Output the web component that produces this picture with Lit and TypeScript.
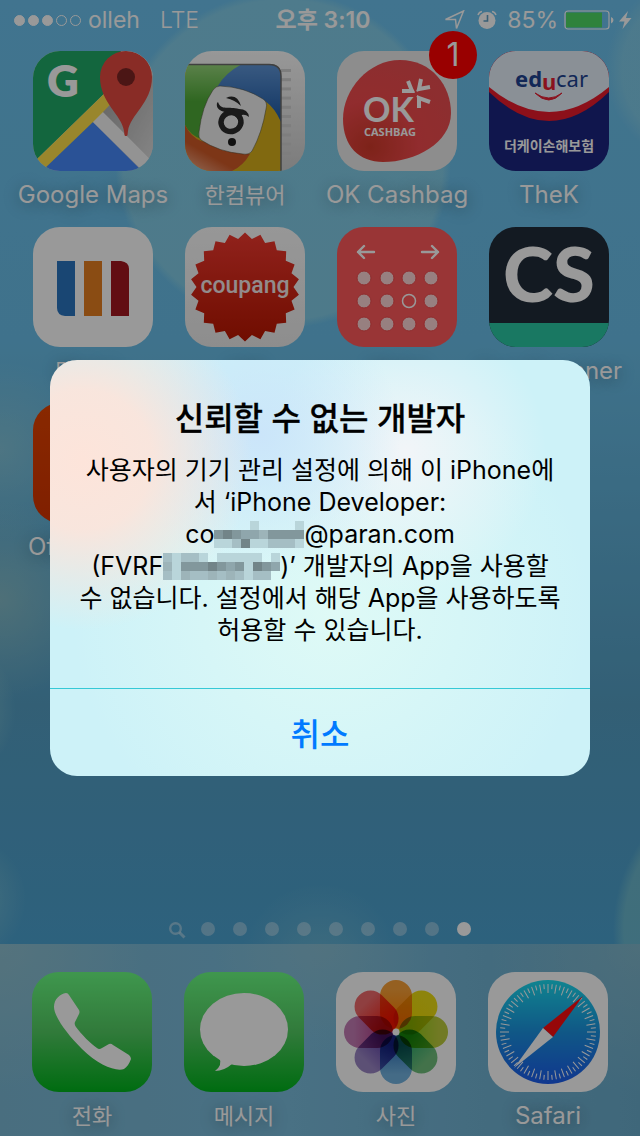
import { LitElement, html, svg, css, type TemplateResult } from "lit";
import { customElement, property } from "lit/decorators.js";

interface AppItem {
  name: string;
  lang: string;
  icon: TemplateResult;
  badge?: number;
}

const mapsIcon = html`<svg viewBox="0 0 120 120" aria-hidden="true">
  <defs>
    <linearGradient id="land" x1="0" y1="0" x2="1" y2="1">
      <stop offset="0" stop-color="#f4f4f4" /><stop offset="1" stop-color="#d6d6d6" />
    </linearGradient>
    <linearGradient id="shade" x1="0" y1="0" x2="1" y2="1">
      <stop offset="0" stop-color="#a4a4a4" /><stop offset="1" stop-color="#dedede" />
    </linearGradient>
  </defs>
  <rect width="120" height="120" fill="url(#land)" />
  <path d="M0 0H88L74 40L0 112Z" fill="#20ab68" />
  <path d="M0 112L76 38L86 46L12 120H0Z" fill="#ffe04a" />
  <path d="M60 71L9 120H109Z" fill="#4789fa" />
  <path d="M60 71L70 61L122 113L112 122Z" fill="#f6f6f6" />
  <path d="M70 61L92 38L120 24V111Z" fill="url(#shade)" />
  <path d="M93 85C91 85 91.500 83 91 80C89 64 67 52 67 26A26 26 0 0 1 119 26C119 52 97 64 95 80C94.500 83 95 85 93 85Z" fill="#e44a40" />
  <circle cx="93" cy="26" r="9" fill="#7d2624" />
  <text x="30" y="46" text-anchor="middle" font-family="Lato" font-weight="800" font-size="44" fill="#fff">G</text>
</svg>`;

const hancomLines = Array.from({ length: 10 }, (_, i) => svg`<rect x="96" y=${18 + i * 9.2} width="10" height="3" fill="#d2d2d2" />`);

const hancomIcon = html`<svg viewBox="0 0 120 120" aria-hidden="true">
  <defs>
    <linearGradient id="paper" x1="0" y1="0" x2="0" y2="1">
      <stop offset="0" stop-color="#fdfdfd" /><stop offset="1" stop-color="#cfcfcf" />
    </linearGradient>
    <linearGradient id="leaf" x1="0" y1="0" x2="0" y2="1">
      <stop offset="0" stop-color="#98d87c" /><stop offset=".5" stop-color="#4fab37" />
    </linearGradient>
    <linearGradient id="sea" x1="0" y1="0" x2="0" y2="1">
      <stop offset="0" stop-color="#6096d8" /><stop offset="1" stop-color="#1d5aa6" />
    </linearGradient>
    <linearGradient id="rust" x1="0" y1="1" x2=".8" y2="0">
      <stop offset="0" stop-color="#f2b193" /><stop offset=".4" stop-color="#d05a27" />
    </linearGradient>
    <clipPath id="panel"><path d="M0 13H84Q96 13 96 25V120H0Z" /></clipPath>
  </defs>
  <rect width="120" height="120" fill="url(#paper)" />
  ${hancomLines}
  <g clip-path="url(#panel)">
    <rect width="96" height="120" fill="#d8b01c" />
    <path d="M0 13H58Q40 24 32 36L16 88Q5 84 0 74Z" fill="url(#leaf)" />
    <path d="M57 13H96V71Q90 57 80 50L32 36Q40 22 57 13Z" fill="url(#sea)" />
    <path d="M0 74Q6 86 16 90L65 103Q58 115 47 120H0Z" fill="url(#rust)" />
    <path d="M35 35Q60 36 78 48Q83 51 81 58Q77 82 67 100Q64 104 58 103Q34 101 16 89Q13 87 14 81Q17 55 28 39Q31 35 35 35Z" fill="#f1f1f1" stroke="#4c4c38" stroke-opacity=".5" />
  </g>
  <path d="M3 13.500H84Q96 13.500 96 25V120" fill="none" stroke="#6b6b6b" stroke-width="1.500" />
  <ellipse cx="46" cy="71" rx="10" ry="9.500" fill="none" stroke="#2c2c2c" stroke-width="5.500" transform="rotate(-20 46 71)" />
  <path d="M33 51C36 60 44 55 54 58Q63 58 64 66Q59 62 55 65Q58 70 58 75L51 66C44 60 30 62 32 52Z" fill="#2c2c2c" />
  <path d="M41 47Q52 42 56 55Q50 49 41 47Z" fill="#2c2c2c" />
  <circle cx="47" cy="91" r="4" fill="#1c1c1c" />
</svg>`;

const cashbagIcon = html`<svg viewBox="0 0 120 120" aria-hidden="true">
  <defs>
    <radialGradient id="bag" cx=".25" cy=".85" r=".9">
      <stop offset="0" stop-color="#d13a2a" /><stop offset=".5" stop-color="#f24a4d" /><stop offset="1" stop-color="#ea4e50" />
    </radialGradient>
  </defs>
  <rect width="120" height="120" fill="#ececec" />
  <path d="M63 9C95 9 114 35 114 62C114 92 78 111 46 111C22 111 6 95 6 68C6 38 32 9 63 9Z" fill="url(#bag)" />
  <text x="26" y="71" font-family="Lato" font-weight="700" font-size="34" fill="#fff">OK</text>
  <text x="27" y="85" font-family="Open Sans" font-weight="700" font-size="11" fill="#fff">CASHBAG</text>
  <path d="M71 30L75 40H65M84 28L82 38L93 36M82 57V47L93 51" fill="none" stroke="#fff" stroke-width="4" />
  <path d="M74 37L77 41M80 40L84 36M80 45L84 49" fill="none" stroke="#fff" stroke-width="2" />
</svg>`;

const thekIcon = html`<svg viewBox="0 0 120 120" aria-hidden="true">
  <rect width="120" height="120" fill="#1b2580" />
  <path d="M0 0H120V41Q60 99 0 41Z" fill="#ea1b2c" />
  <path d="M0 0H120V36Q60 86 0 36Z" fill="#e6f0fa" />
  <text y="36" font-family="Noto Sans" font-size="22" fill="#1e4391"><tspan x="26" font-weight="700">ed</tspan><tspan x="53" y="39" font-weight="700" fill="#e71f32">u</tspan><tspan x="67" y="36">car</tspan></text>
  <path d="M46 42Q60 56 73 42Q60 52 46 42Z" fill="#e71f32" stroke="#e71f32" />
  <text x="60" y="100" text-anchor="middle" font-family="Noto Sans CJK KR" font-size="14" font-weight="700" fill="#fff">더케이손해보험</text>
</svg>`;

const barsIcon = html`<svg viewBox="0 0 120 120" aria-hidden="true">
  <rect width="120" height="120" fill="#fff" />
  <path d="M24 34H42V89H32Q24 88 24 81Z" fill="#2a75c0" />
  <rect x="51" y="34" width="18" height="55" fill="#e67f21" />
  <path d="M78 34H88Q96 35 96 42V89H78Z" fill="#a3171e" />
</svg>`;

const burst = Array.from({ length: 44 }, (_, i) => {
  const r = i % 2 ? 48.5 : 54.5;
  const a = (i * Math.PI) / 22 - Math.PI / 2;
  return `${(60 + r * Math.cos(a)).toFixed(1)},${(60 + r * Math.sin(a)).toFixed(1)}`;
}).join(" ");

const coupangIcon = html`<svg viewBox="0 0 120 120" aria-hidden="true">
  <defs>
    <linearGradient id="seal" x1="0" y1="0" x2="0" y2="1">
      <stop offset="0" stop-color="#f2392f" /><stop offset="1" stop-color="#ba1600" />
    </linearGradient>
    <linearGradient id="cloth" x1="0" y1="0" x2="0" y2="1">
      <stop offset="0" stop-color="#fcfcfc" /><stop offset="1" stop-color="#ececec" />
    </linearGradient>
  </defs>
  <rect width="120" height="120" fill="url(#cloth)" />
  <polygon points=${burst} fill="url(#seal)" />
  <text x="60" y="66" text-anchor="middle" font-family="Roboto" font-weight="500" font-size="23" fill="#f4eaea">coupang</text>
</svg>`;

const calendarDots = [51, 74, 97].flatMap((y, r) =>
  [27, 50, 72, 94].map((x, c) =>
    r === 1 && c === 2
      ? svg`<circle cx=${x} cy=${y} r="6.500" fill="none" stroke="#fff" stroke-width="1.500" />`
      : svg`<circle cx=${x} cy=${y} r="7" fill="#fcd6d6" stroke="#f0484a" />`
  )
);

const calendarIcon = html`<svg viewBox="0 0 120 120" aria-hidden="true">
  <rect width="120" height="120" fill="#ff595b" />
  <path d="M37 25H21M27 19L21 25L27 31M85 25H101M95 19L101 25L95 31" fill="none" stroke="#fff" stroke-width="2.400" stroke-linecap="round" stroke-linejoin="round" />
  ${calendarDots}
</svg>`;

const scannerIcon = html`<svg viewBox="0 0 120 120" aria-hidden="true">
  <rect width="120" height="120" fill="#212c3a" />
  <rect y="96" width="120" height="24" fill="#2bc8a3" />
  <text x="60" y="75" text-anchor="middle" font-family="Lato" font-weight="900" font-size="76" fill="#fff">CS</text>
</svg>`;

const lensIcon = html`<svg viewBox="0 0 120 120" aria-hidden="true">
  <defs>
    <linearGradient id="lens" x1="0" y1="0" x2="0" y2="1">
      <stop offset="0" stop-color="#e44400" /><stop offset="1" stop-color="#d53400" />
    </linearGradient>
  </defs>
  <rect width="120" height="120" fill="url(#lens)" />
</svg>`;

const greenStops = svg`<stop offset="0" stop-color="#6afc82" /><stop offset=".5" stop-color="#52cc62" /><stop offset="1" stop-color="#00b41c" />`;

const phoneIcon = html`<svg viewBox="0 0 120 120" aria-hidden="true">
  <defs><linearGradient id="call" x1="0" y1="0" x2="0" y2="1">${greenStops}</linearGradient></defs>
  <rect width="120" height="120" fill="url(#call)" />
  <path d="M22 35C22 27 28 22 34 21Q36 21 37 23L47 38Q48 40 47 42L43 50Q42 52 44 55C50 63 58 71 65 76Q67 78 70 76L77 72Q79 71 81 73L97 83Q99 85 99 87C97 92 95 95 92 97C84 100 66 93 50 77C34 61 22 44 22 35Z" fill="#fff" />
</svg>`;

const messagesIcon = html`<svg viewBox="0 0 120 120" aria-hidden="true">
  <defs><linearGradient id="chat" x1="0" y1="0" x2="0" y2="1">${greenStops}</linearGradient></defs>
  <rect width="120" height="120" fill="url(#chat)" />
  <ellipse cx="60" cy="57.500" rx="44" ry="36.500" fill="#fff" />
  <path d="M35 85Q39 93 31 99Q40 99 48 92Z" fill="#fff" />
</svg>`;

/* Outer and inner tone of each petal, clockwise from the top. */
const petalTones = [
  ["#f8a038", "#ff8200"],
  ["#ecdc14", "#eed800"],
  ["#bccc3c", "#8cc814"],
  ["#70bf7c", "#24a468"],
  ["#72b2df", "#2f74bc"],
  ["#9a86c4", "#5c3ea6"],
  ["#c47cb4", "#b03a84"],
  ["#ee6a6c", "#f42418"],
];

const photosIcon = html`<svg viewBox="0 0 120 120" aria-hidden="true">
  <defs>
    ${petalTones.map(
      ([outer, inner], i) => svg`<linearGradient id=${`petal${i}`} x1="0" y1="0" x2="0" y2="1">
        <stop offset=".2" stop-color=${outer} /><stop offset=".8" stop-color=${inner} />
      </linearGradient>`
    )}
  </defs>
  <rect width="120" height="120" fill="#fff" />
  ${petalTones.map(
    (_, i) => svg`<rect class="petal" x="44" y="8" width="32" height="49" rx="16" fill=${`url(#petal${i})`} transform=${`rotate(${i * 45} 60 60)`} />`
  )}
  <circle cx="60" cy="60" r="3.500" fill="#fff" />
</svg>`;

const ticks = Array.from(
  { length: 72 },
  (_, i) => svg`<path d=${i % 2 ? "M60 12V17" : "M60 12V21"} stroke="#fff" transform=${`rotate(${i * 5} 60 60)`} />`
);

const safariIcon = html`<svg viewBox="0 0 120 120" aria-hidden="true">
  <defs>
    <linearGradient id="dial" x1="0" y1="0" x2="0" y2="1">
      <stop offset="0" stop-color="#1cdcf0" /><stop offset=".5" stop-color="#1b92e0" /><stop offset="1" stop-color="#1c5cee" />
    </linearGradient>
  </defs>
  <rect width="120" height="120" fill="#fff" />
  <circle cx="60" cy="60" r="52" fill="url(#dial)" />
  ${ticks}
  <path d="M95 24L55 56L65 65Z" fill="#fb0d0f" />
  <path d="M26 96L55 56L65 65Z" fill="#fff" />
</svg>`;

const homeApps: AppItem[] = [
  { name: "Google Maps", lang: "en", icon: mapsIcon },
  { name: "한컴뷰어", lang: "ko", icon: hancomIcon },
  { name: "OK Cashbag", lang: "en", icon: cashbagIcon, badge: 1 },
  { name: "TheK", lang: "en", icon: thekIcon },
  { name: "멤버십+", lang: "ko", icon: barsIcon },
  { name: "쿠팡", lang: "ko", icon: coupangIcon },
  { name: "캘린더", lang: "ko", icon: calendarIcon },
  { name: "CamScanner", lang: "en", icon: scannerIcon },
  { name: "Office Lens", lang: "en", icon: lensIcon },
];

const dockApps: AppItem[] = [
  { name: "전화", lang: "ko", icon: phoneIcon },
  { name: "메시지", lang: "ko", icon: messagesIcon },
  { name: "사진", lang: "ko", icon: photosIcon },
  { name: "Safari", lang: "en", icon: safariIcon },
];

@customElement("app-tile")
class AppTile extends LitElement {
  @property({ attribute: false }) app!: AppItem;

  static styles = css`
    :host { display: block; min-width: 0; }
    .tile {
      display: flex; flex-direction: column; align-items: center; gap: 10px;
      width: 100%; padding: 0; border: 0; background: none; color: #fff; font: inherit;
    }
    .frame { position: relative; width: 120px; height: 120px; }
    .frame svg { display: block; width: 100%; height: 100%; border-radius: 27px; isolation: isolate; }
    .petal { mix-blend-mode: multiply; }
    .label {
      font-size: 24px; line-height: 28px; white-space: nowrap;
      text-shadow: 0 2px 16px rgba(0, 0, 0, 0.4);
    }
    .label:lang(ko) { font-size: 22px; }
    .badge {
      position: absolute; top: -20px; right: -20px; width: 48px; height: 48px;
      border-radius: 50%; background: #ff0000; font-size: 32px; line-height: 48px; text-align: center;
    }
  `;

  render() {
    const { name, lang, icon, badge } = this.app;
    return html`<button class="tile" type="button">
      <span class="frame">${icon}${badge ? html`<span class="badge">${badge}</span>` : ""}</span>
      <span class="label" lang=${lang}>${name}</span>
    </button>`;
  }
}

@customElement("status-bar")
class StatusBar extends LitElement {
  static styles = css`
    :host {
      display: grid; grid-template-columns: 1fr auto 1fr; align-items: center;
      height: 40px; padding: 0 8px 0 14px; color: #fff; font-size: 23px; line-height: 40px;
    }
    .side { display: flex; align-items: center; }
    .signal { display: flex; gap: 3px; margin-right: 7px; }
    .bar { box-sizing: border-box; width: 11px; height: 11px; border: 1px solid #fff; border-radius: 50%; }
    .on { background: #fff; }
    .network { margin-left: 20px; font-weight: 300; }
    .time { font-weight: 600; }
    .end { justify-content: flex-end; }
    svg { display: block; }
    .arrow { margin-right: 12px; }
    .alarm { margin-right: 10px; }
    .battery { margin: 0 5px 0 6px; }
  `;

  render() {
    return html`
      <div class="side">
        <span class="signal">${[1, 1, 1, 0, 0].map((on) => html`<i class="bar ${on ? "on" : ""}"></i>`)}</span>
        <span>olleh</span><span class="network">LTE</span>
      </div>
      <div class="time">오후 3:10</div>
      <div class="side end">
        <svg class="arrow" width="21" height="20" viewBox="0 0 21 20" aria-hidden="true">
          <path d="M1.500 9.500L19.500 1L12.500 18.500L11.500 9.500Z" fill="none" stroke="#fff" stroke-width="1.500" />
        </svg>
        <svg class="alarm" width="20" height="20" viewBox="0 0 20 20" aria-hidden="true">
          <circle cx="10" cy="10.500" r="8.500" fill="#fff" />
          <path d="M1 5Q2 2 5 1.500M19 5Q18 2 15 1.500" fill="none" stroke="#fff" stroke-width="1.500" />
          <path d="M10.500 5V11H6.500" fill="none" stroke="#5f9fc4" stroke-width="1.600" />
        </svg>
        <span>85%</span>
        <svg class="battery" width="50" height="20" viewBox="0 0 50 20" aria-hidden="true">
          <rect x="1" y="1" width="44" height="18" rx="3" fill="none" stroke="#fff" stroke-width="1.200" />
          <rect x="2" y="2.500" width="36" height="15" fill="#4fd964" />
          <path d="M47 7Q49.500 8 49.500 10Q49.500 12.500 47 13.500Z" fill="#fff" />
        </svg>
        <svg width="13" height="18" viewBox="0 0 13 18" aria-hidden="true">
          <path d="M9 0L0 10.500H5.500L3.500 18L12.500 7H7Z" fill="#fff" />
        </svg>
      </div>
    `;
  }
}

/* Tone of each cell in a redaction block; "." leaves the cell clear. */
const tones: Record<string, string> = {
  a: "#b9d5da", b: "#a5bec4", c: "#8fa6ac", d: "#82979c", e: "#728488", f: "#9db4b9",
};

@customElement("censor-block")
class CensorBlock extends LitElement {
  @property({ attribute: false }) rows: string[] = [];

  static styles = css`
    :host { display: inline-block; vertical-align: -5px; line-height: 0; }
  `;

  render() {
    const width = this.rows[0].length * 9;
    return html`<svg width=${width} height="27" viewBox="0 0 ${width} 27" shape-rendering="crispEdges" aria-hidden="true">
      ${this.rows.flatMap((row, y) =>
        [...row].map((t, x) => (t === "." ? "" : svg`<rect x=${x * 9} y=${y * 9} width="9" height="9" fill=${tones[t]} />`))
      )}
    </svg>`;
  }
}

@customElement("trust-alert")
class TrustAlert extends LitElement {
  static styles = css`
    :host {
      display: block; width: 540px; max-width: calc(100% - 32px); overflow: hidden;
      border-radius: 27px; color: #000; text-align: center;
      background:
        radial-gradient(circle at 6% 24%, #fde4da 0, rgba(253, 228, 218, 0.9) 70px, rgba(253, 228, 218, 0) 170px),
        radial-gradient(circle at 39% 18%, #cbe5fa 0, rgba(203, 229, 250, 0) 140px),
        radial-gradient(circle at 66% 22%, #f2f5f8 0, rgba(242, 245, 248, 0) 140px),
        radial-gradient(circle at 52% 60%, #dffaf6 0, rgba(223, 250, 246, 0) 260px),
        #cdf2f8;
    }
    .content { padding: 39px 16px 42px; }
    h1 { margin: 0 0 15px; font-size: 32px; line-height: 40px; font-weight: 500; -webkit-text-stroke: 0.3px #000; }
    p { margin: 0; font-size: 25px; line-height: 32px; }
    button {
      display: block; width: 100%; height: 88px; padding: 0 0 2px; border: 0; border-top: 1px solid #35c9d6;
      background: none; color: #007aff; font: inherit; font-size: 32px; font-weight: 500;
    }
  `;

  render() {
    return html`
      <div class="content">
        <h1 id="title">신뢰할 수 없는 개발자</h1>
        <p>
          사용자의 기기 관리 설정에 의해 이 iPhone에<br />서 ‘iPhone Developer:<br />co<censor-block
            .rows=${["....a....a", "dedccfdddd", "aabeaabbba"]}
          ></censor-block>@paran.com<br />(FVRF<censor-block
            .rows=${["babba.aaaaa.a", "fadddedcdaedc", "bafbbfbfbabb."]}
          ></censor-block>)’ 개발자의 App을 사용할<br />수 없습니다. 설정에서 해당 App을 사용하도록<br />허용할 수 있습니다.
        </p>
      </div>
      <button type="button">취소</button>
    `;
  }
}

@customElement("app-root")
class AppRoot extends LitElement {
  static styles = css`
    :host {
      position: relative; display: flex; flex-direction: column; min-height: 100vh; overflow: hidden;
      font-family: "Inter", "Noto Sans CJK KR", sans-serif;
      background:
        radial-gradient(circle at 283px 160px, rgba(170, 225, 225, 0.36) 160px, rgba(170, 225, 225, 0) 168px),
        radial-gradient(circle at 700px 70px, rgba(170, 225, 225, 0.3) 78px, rgba(170, 225, 225, 0) 94px),
        radial-gradient(circle at 0 600px, rgba(190, 215, 190, 0.4) 0, rgba(190, 215, 190, 0) 100px),
        radial-gradient(circle at 0 450px, rgba(180, 220, 210, 0.36) 0, rgba(180, 220, 210, 0) 90px),
        radial-gradient(circle at -60px 710px, rgba(160, 215, 215, 0.3) 50px, rgba(160, 215, 215, 0) 76px),
        radial-gradient(circle at -40px 900px, rgba(160, 215, 215, 0.3) 30px, rgba(160, 215, 215, 0) 66px),
        radial-gradient(circle at 770px 930px, rgba(150, 215, 205, 0.4) 146px, rgba(150, 215, 205, 0) 157px),
        radial-gradient(circle at 320px 964px, rgba(160, 215, 215, 0.35) 0, rgba(160, 215, 215, 0) 80px),
        linear-gradient(#6dc2ee 0, #6abfe9 30%, #559fc4 62%, #4ba3d2 85%, #4ba3d2 100%);
    }
    .grid {
      flex: 1; display: grid; grid-template-columns: repeat(4, 1fr); align-content: start;
      row-gap: 18px; padding: 11px 15px 0 17px;
    }
    .pages { display: flex; justify-content: center; align-items: center; gap: 18px; height: 30px; }
    .page { width: 14px; height: 14px; border-radius: 50%; background: rgba(255, 255, 255, 0.35); }
    .current { background: #fff; }
    .search { overflow: visible; }
    .dock {
      display: grid; grid-template-columns: repeat(4, 1fr); padding: 28px 16px 6px;
      background:
        radial-gradient(circle at 0 0, rgba(160, 200, 205, 0.5) 0, rgba(160, 200, 205, 0) 150px),
        radial-gradient(circle at 50% 0, rgba(150, 195, 205, 0.5) 0, rgba(150, 195, 205, 0) 110px),
        radial-gradient(circle at 100% 0, rgba(150, 195, 205, 0.5) 0, rgba(150, 195, 205, 0) 150px),
        linear-gradient(90deg, #7ab8d4 0, #7abcdc 45%, #6aaccc 100%);
    }
    .shade {
      position: absolute; inset: 0; display: flex; align-items: center; justify-content: center;
      background: rgba(0, 0, 0, 0.4);
    }
  `;

  render() {
    return html`
      <status-bar></status-bar>
      <main class="grid">${homeApps.map((app) => html`<app-tile .app=${app}></app-tile>`)}</main>
      <div class="pages">
        <svg class="search" width="14" height="14" viewBox="0 0 14 14" aria-hidden="true">
          <circle cx="6.500" cy="6.500" r="5.300" fill="none" stroke="#fff" stroke-opacity=".4" stroke-width="2.400" />
          <path d="M10.500 10.500L15.500 15.500" stroke="#fff" stroke-opacity=".4" stroke-width="3" />
        </svg>
        ${Array.from({ length: 9 }, (_, i) => html`<i class="page ${i === 8 ? "current" : ""}"></i>`)}
      </div>
      <nav class="dock">${dockApps.map((app) => html`<app-tile .app=${app}></app-tile>`)}</nav>
      <div class="shade"><trust-alert role="alertdialog" aria-modal="true" aria-label="신뢰할 수 없는 개발자"></trust-alert></div>
    `;
  }
}
